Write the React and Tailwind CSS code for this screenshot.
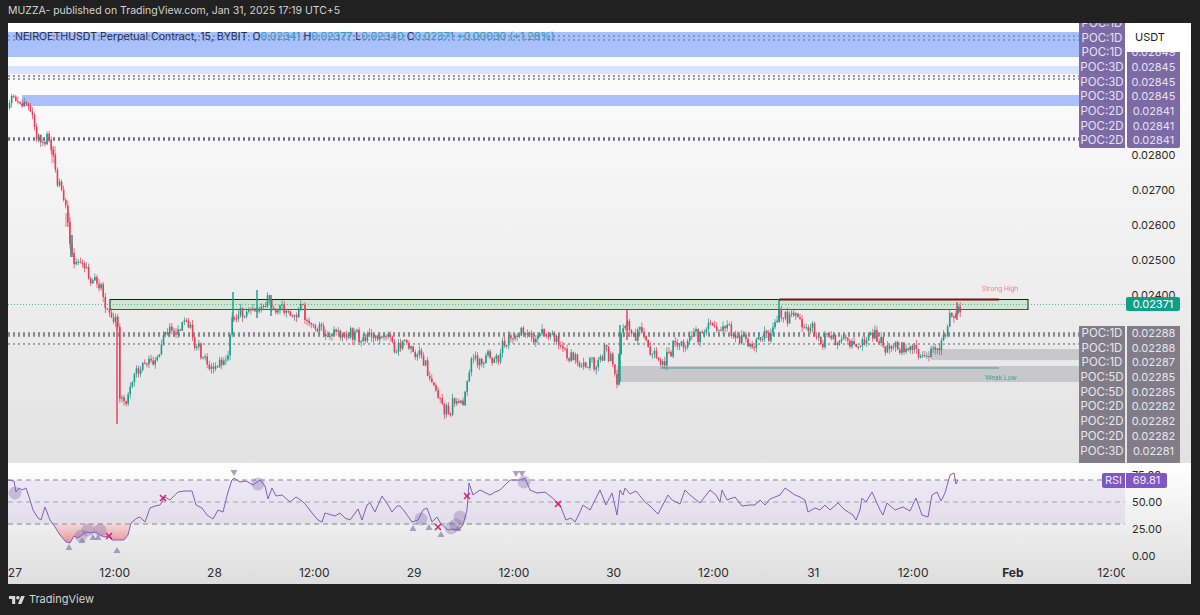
import React from "react";

const FONT = "font-['Inter','Liberation_Sans',sans-serif]";

// price path traced from the chart, page coordinates [x, y]
const pricePath = [
  [9, 108], [12, 100], [16, 105], [20, 103], [24, 100], [28, 105], [30, 115], [34, 130], [40, 135], [44, 145], [47, 135],
  [50, 150], [53, 155], [55, 170], [58, 180], [62, 195], [65, 210], [68, 230], [71, 250], [74, 262], [78, 265], [84, 268],
  [90, 275], [95, 285], [100, 292], [105, 300], [110, 315], [113, 325], [117, 322], [119, 395], [125, 400], [130, 385],
  [135, 375], [140, 368], [147, 360], [155, 358], [162, 340], [168, 335], [175, 330], [183, 322], [190, 325], [195, 345],
  [205, 362], [213, 372], [222, 365], [228, 345], [232, 325], [237, 312], [245, 310], [255, 310], [262, 306], [270, 305],
  [280, 310], [290, 312], [300, 310], [305, 318], [315, 328], [330, 335], [345, 335], [360, 338], [375, 338], [385, 335],
  [395, 345], [405, 345], [415, 352], [425, 365], [432, 385], [440, 405], [450, 408], [460, 405], [465, 385], [470, 365],
  [473, 360], [480, 358], [490, 360], [500, 350], [510, 340], [520, 335], [535, 337], [550, 335], [560, 345], [570, 358],
  [585, 365], [595, 365], [603, 350], [610, 360], [617, 378], [619, 340], [622, 325], [630, 330], [640, 335], [650, 350],
  [660, 365], [668, 350], [680, 345], [690, 338], [700, 332], [720, 328], [735, 335], [750, 345], [765, 335], [775, 325],
  [780, 312], [790, 315], [800, 322], [815, 335], [830, 342], [850, 340], [858, 350], [870, 330], [880, 345], [900, 348],
  [915, 348], [930, 358], [935, 345], [945, 335], [950, 315], [957, 305], [960, 310],
];

// the long wicks that stick out of the path
const spikes = [
  [117, 322, 424, "#ee3a56"],
  [233, 292, 322, "#1a9c8a"],
  [257, 290, 318, "#1a9c8a"],
  [271, 295, 316, "#1a9c8a"],
  [627, 310, 340, "#ee3a56"],
  [620, 325, 382, "#1a9c8a"],
  [779, 299, 322, "#1a9c8a"],
  [957, 302, 320, "#ee3a56"],
];

const rsiPath = [
  [8, 480], [14, 481], [16, 492], [19, 488], [22, 490], [26, 488], [30, 500], [33, 510], [38, 518], [41, 520], [45, 507],
  [50, 520], [55, 527], [60, 535], [66, 542], [70, 543], [74, 536], [78, 538], [82, 535], [86, 532], [90, 533], [96, 532],
  [100, 535], [104, 537], [108, 536], [112, 540], [118, 540], [124, 540], [128, 535], [131, 523], [137, 518], [140, 517],
  [145, 522], [150, 508], [155, 506], [160, 505], [165, 497], [170, 500], [178, 492], [185, 491], [192, 491], [196, 505],
  [202, 508], [207, 515], [213, 519], [218, 510], [223, 512], [228, 492], [232, 480], [234, 478], [240, 482], [246, 481],
  [253, 485], [260, 480], [265, 486], [268, 499], [272, 488], [276, 496], [282, 495], [290, 502], [296, 497], [302, 501],
  [306, 505], [312, 513], [318, 520], [322, 522], [325, 513], [335, 516], [340, 513], [345, 518], [350, 520], [358, 509],
  [362, 520], [367, 505], [370, 503], [375, 512], [382, 496], [388, 505], [392, 512], [397, 506], [400, 506], [405, 512],
  [412, 522], [418, 520], [423, 510], [427, 508], [432, 522], [437, 517], [441, 524], [448, 530], [452, 529], [458, 530],
  [463, 525], [467, 510], [469, 483], [473, 495], [480, 490], [490, 495], [495, 492], [500, 490], [510, 480], [517, 480],
  [520, 480], [525, 478], [530, 490], [537, 493], [545, 492], [555, 500], [560, 505], [566, 520], [571, 518], [575, 522],
  [580, 512], [583, 505], [590, 510], [600, 490], [606, 505], [612, 493], [617, 515], [620, 490], [623, 495], [625, 488],
  [630, 494], [636, 491], [645, 502], [650, 506], [658, 514], [668, 495], [672, 500], [680, 504], [685, 490], [690, 495],
  [700, 503], [710, 490], [716, 495], [720, 502], [722, 490], [727, 500], [735, 497], [742, 506], [750, 505], [755, 505],
  [760, 500], [765, 505], [770, 499], [780, 495], [785, 488], [795, 495], [800, 497], [805, 500], [808, 512], [815, 508],
  [820, 510], [825, 505], [830, 510], [838, 503], [845, 510], [853, 515], [856, 520], [860, 510], [862, 498], [866, 502],
  [872, 492], [880, 510], [883, 515], [887, 503], [895, 510], [903, 507], [910, 511], [916, 498], [922, 515], [928, 517],
  [932, 495], [937, 492], [941, 501], [945, 493], [950, 475], [954, 473], [956, 484], [958, 480],
];

const rsiCircles = [
  [15, 493], [81, 536], [88, 530], [100, 530], [258, 484], [421, 519], [451, 528], [456, 525], [460, 517], [524, 482],
];
const rsiUp = [[69, 547], [117, 550], [82, 540], [93, 537], [98, 537], [413, 528], [429, 527], [441, 534], [458, 528]];
const rsiDown = [[234, 473], [516, 474], [522, 474]];
const rsiCross = [[163, 498], [109, 536], [438, 527], [467, 496], [558, 504]];

const topPoc = [
  ["POC:1D", "0.02849"],
  ["POC:3D", "0.02845"],
  ["POC:3D", "0.02845"],
  ["POC:3D", "0.02845"],
  ["POC:2D", "0.02841"],
  ["POC:2D", "0.02841"],
  ["POC:2D", "0.02841"],
];
const lowPoc = [
  ["POC:1D", "0.02288"],
  ["POC:1D", "0.02288"],
  ["POC:1D", "0.02287"],
  ["POC:5D", "0.02285"],
  ["POC:5D", "0.02285"],
  ["POC:2D", "0.02282"],
  ["POC:2D", "0.02282"],
  ["POC:2D", "0.02282"],
  ["POC:3D", "0.02281"],
];
const timeLabels = ["27", "12:00", "28", "12:00", "29", "12:00", "30", "12:00", "31", "12:00", "Feb", "12:00"];

const interp = (path, x) => {
  for (let i = 1; i < path.length; i++) {
    if (x <= path[i][0]) {
      const [x0, y0] = path[i - 1];
      const [x1, y1] = path[i];
      return y0 + ((y1 - y0) * (x - x0)) / (x1 - x0);
    }
  }
  return path[path.length - 1][1];
};

const makeCandles = () => {
  let seed = 27;
  const rnd = () => {
    seed = (seed * 16807) % 2147483647;
    return seed / 2147483647;
  };
  const candles = [];
  let prev = pricePath[0][1];
  for (let x = 9; x <= 960; x += 2.08) {
    // slow swing on top of the traced path, so the candles chop like the real ones
    const swing = Math.sin(x * 0.37) * 3.5 + Math.sin(x * 0.91 + 1) * 2.5;
    const close = interp(pricePath, x) + swing + (rnd() - 0.5) * 10;
    const top = Math.min(prev, close);
    const bottom = Math.max(prev, close);
    candles.push({
      x,
      top,
      h: Math.max(bottom - top, 1),
      wickTop: top - rnd() * 5,
      wickBottom: bottom + rnd() * 5,
      up: close < prev,
    });
    prev = close;
  }
  return candles;
};

const candles = makeCandles();
const toPoints = (path) => path.map((p) => p.join(",")).join(" ");

const PriceChart = () => (
  <svg className="absolute inset-0 w-full h-full blur-[0.3px]" viewBox="8 23 1117 440">
    {/* supply zones */}
    <rect x="8" y="32" width="1072" height="25" fill="#a9c1fb" />
    <rect x="8" y="66" width="1072" height="8" fill="#d8e3fd" />
    <rect x="22" y="95" width="1058" height="11" fill="#abc0fa" />
    <line x1="8" x2="1080" y1="36" y2="36" stroke="#6f8ad0" strokeWidth="1.3" strokeDasharray="2 3" />
    <line x1="8" x2="1080" y1="40" y2="40" stroke="#6f8ad0" strokeWidth="1.3" strokeDasharray="2 3" />
    <line x1="8" x2="1080" y1="76" y2="76" stroke="#7a7a96" strokeWidth="1.3" strokeDasharray="2 3" />
    <line x1="8" x2="1080" y1="79" y2="79" stroke="#7a7a96" strokeWidth="1.3" strokeDasharray="2 3" />
    <line x1="8" x2="1080" y1="139" y2="139" stroke="#70708a" strokeWidth="3.5" strokeDasharray="2 3" />

    {/* lower zones and levels */}
    <rect x="932" y="349" width="148" height="11" fill="#c8c8ca" />
    <rect x="617" y="366" width="463" height="16" fill="#c8c8ca" />
    <line x1="8" x2="1080" y1="334.5" y2="334.5" stroke="#88888b" strokeWidth="4.5" strokeDasharray="2 3" />
    <line x1="8" x2="1080" y1="344" y2="344" stroke="#88888b" strokeWidth="1.3" strokeDasharray="2 3" />
    <line x1="660" x2="999" y1="368" y2="368" stroke="#4f9d94" strokeWidth="1" />

    {/* green order block */}
    <rect x="110" y="300" width="918" height="10" fill="#cfe5cf" />
    <line x1="110" x2="1028" y1="299.5" y2="299.5" stroke="#16201a" strokeWidth="1" />
    <line x1="110" x2="1028" y1="309.5" y2="309.5" stroke="#4a544c" strokeWidth="1.2" />
    <line x1="110" x2="110" y1="299" y2="310" stroke="#16201a" strokeWidth="1" />
    <line x1="1028" x2="1028" y1="299" y2="310" stroke="#16201a" strokeWidth="1" />
    <line x1="8" x2="1125" y1="304.5" y2="304.5" stroke="#3c9c8c" strokeWidth="0.8" strokeDasharray="1 2" />

    {/* candles */}
    {candles.map((c) => (
      <g key={c.x} fill={c.up ? "#1a9c8a" : "#ee3a56"}>
        <rect x={c.x + 0.25} y={c.wickTop} width="0.7" height={c.wickBottom - c.wickTop} />
        <rect x={c.x - 0.2} y={c.top} width="1.6" height={c.h} />
      </g>
    ))}
    {spikes.map(([x, y1, y2, color]) => (
      <rect key={x} x={x - 0.7} y={y1} width="1.4" height={y2 - y1} fill={color} />
    ))}
    <rect x="51" y="146" width="5" height="17" fill="#ee3a56" fillOpacity="0.35" />
    <rect x="65" y="213" width="5" height="14" fill="#ee3a56" fillOpacity="0.35" />
    <rect x="70" y="235" width="3" height="22" fill="#77777a" fillOpacity="0.8" />

    <rect x="779" y="298.5" width="220" height="2" fill="#7a1020" />

    <text x="1000" y="291" textAnchor="middle" fontSize="6.5" fill="#e77c88" fontFamily="Inter, sans-serif">
      Strong High
    </text>
    <text x="1001" y="380" textAnchor="middle" fontSize="6.5" fill="#3f9c90" fontFamily="Inter, sans-serif">
      Weak Low
    </text>
  </svg>
);

const RsiChart = () => (
  <svg className="absolute inset-0 w-full h-full" viewBox="8 463 1117 121">
    <defs>
      <linearGradient id="oversold" x1="0" x2="0" y1="0" y2="1">
        <stop offset="0" stopColor="#f7a8a8" stopOpacity="0.1" />
        <stop offset="1" stopColor="#ee6a78" stopOpacity="0.75" />
      </linearGradient>
      <clipPath id="below30">
        <rect x="8" y="524" width="1117" height="40" />
      </clipPath>
    </defs>
    <rect x="8" y="480" width="1117" height="44" fill="#7e57c2" fillOpacity="0.1" />
    <line x1="8" x2="1125" y1="480" y2="480" stroke="#85818f" strokeDasharray="5 4" />
    <line x1="8" x2="1125" y1="502" y2="502" stroke="#a3a0aa" strokeDasharray="5 4" />
    <line x1="8" x2="1125" y1="524" y2="524" stroke="#85818f" strokeDasharray="5 4" />
    <polygon
      clipPath="url(#below30)"
      points={`50,524 ${toPoints(rsiPath.filter((p) => p[0] >= 50 && p[0] <= 137))} 137,524`}
      fill="url(#oversold)"
    />
    {rsiCircles.map(([x, y]) => (
      <circle key={`${x}-${y}`} cx={x} cy={y} r="6.5" fill="#7e6aa8" fillOpacity="0.35" />
    ))}
    {rsiUp.map(([x, y]) => (
      <polygon key={`${x}-${y}`} points={`${x - 3.5},${y + 3} ${x + 3.5},${y + 3} ${x},${y - 3}`} fill="#8f82b0" fillOpacity="0.75" />
    ))}
    {rsiDown.map(([x, y]) => (
      <polygon key={`${x}-${y}`} points={`${x - 3.5},${y - 3} ${x + 3.5},${y - 3} ${x},${y + 3}`} fill="#8f82b0" fillOpacity="0.75" />
    ))}
    <polyline points={toPoints(rsiPath)} fill="none" stroke="#7e5fbd" strokeWidth="1" strokeLinejoin="round" />
    {rsiCross.map(([x, y]) => (
      <path
        key={`${x}-${y}`}
        d={`M${x - 3} ${y - 3}L${x + 3} ${y + 3}M${x + 3} ${y - 3}L${x - 3} ${y + 3}`}
        stroke="#d6246e"
        strokeWidth="1.6"
      />
    ))}
  </svg>
);

const App = () => {
  return (
    <div className={`w-[1200px] h-[615px] bg-[#212121] flex flex-col overflow-hidden ${FONT}`}>
      <div className="h-[23px] pl-2 flex items-center text-[#d4d4d4] text-[10.5px] leading-none whitespace-nowrap">
        MUZZA- published on TradingView.com, Jan 31, 2025 17:19 UTC+5
      </div>

      <div className="w-[1183px] ml-2 flex flex-col">
        {/* main pane */}
        <div className="h-[440px] flex bg-gradient-to-b from-white to-[#e2e2e2] overflow-hidden">
          <div className="relative w-[1117px] shrink-0">
            <PriceChart />
            <div className="absolute left-[7px] top-[8px] h-[13px] flex items-center gap-[5px] text-[10.6px] leading-none whitespace-nowrap text-[#2b2f45]">
              <span>NEIROETHUSDT Perpetual Contract, 15, BYBIT</span>
              <span className="text-[#2f9aa8]">
                <span className="text-[#2b2f45]">O</span>0.02341 <span className="text-[#2b2f45]">H</span>0.02377{" "}
                <span className="text-[#2b2f45]">L</span>0.02340 <span className="text-[#2b2f45]">C</span>0.02371 +0.00030 (+1.28%)
              </span>
            </div>
            {/* left column of the POC labels */}
            <div className="absolute right-0 top-0 w-[46px] h-[125px] bg-[#7b6aa6] text-[#e6e2f0] text-[11.5px] text-center flex flex-col justify-end rounded-bl-[2px] overflow-hidden">
              {["POC:1D", "POC:1D", "POC:1D", "POC:3D", "POC:3D", "POC:3D", "POC:2D", "POC:2D", "POC:2D"].map((label, i) => (
                <div key={i} className="h-[14.7px] shrink-0 leading-[14.7px]">
                  {label}
                </div>
              ))}
            </div>
            <div className="absolute right-0 top-[303px] w-[46px] h-[137px] bg-[#807c88] text-[#e8e8ea] text-[11.5px] text-center overflow-hidden">
              {lowPoc.map(([label], i) => (
                <div key={i} className="h-[14.7px] leading-[14.7px]">
                  {label}
                </div>
              ))}
            </div>
          </div>

          {/* price axis */}
          <div className="relative flex-1 pl-[2px] text-[11px] text-[#2b2b2b] flex flex-col items-start">
            <div className="absolute left-0 right-0 top-0 h-[29px] bg-white text-[#222] text-[11px] flex items-center pl-[10px] z-10">USDT</div>
            <div className="mt-[22px] w-[53px] h-[103px] bg-[#7b6aa6] text-[#e6e2f0] text-center rounded-b-[2px] overflow-hidden flex flex-col justify-end">
              {topPoc.map(([, price], i) => (
                <div key={i} className="h-[14.7px] shrink-0 leading-[14.7px]">
                  {price}
                </div>
              ))}
            </div>
            <div className="w-[53px] text-center">
              {["0.02800", "0.02700", "0.02600", "0.02500", "0.02400"].map((price) => (
                <div key={price} className="h-[15px] leading-[15px] mb-[20px]">
                  {price}
                </div>
              ))}
            </div>
            <div className="absolute left-[1px] top-[274px] w-[54px] h-[14px] bg-[#0e9f87] text-white text-center leading-[14px] rounded-[2px]">
              0.02371
            </div>
            <div className="mt-[3px] w-[53px] h-[137px] bg-[#807c88] text-[#e8e8ea] text-center overflow-hidden">
              {lowPoc.map(([, price], i) => (
                <div key={i} className="h-[14.7px] leading-[14.7px]">
                  {price}
                </div>
              ))}
            </div>
          </div>
        </div>

        {/* rsi pane */}
        <div className="h-[121px] flex bg-gradient-to-b from-white to-[#dedede] overflow-hidden">
          <div className="relative w-[1117px] shrink-0 flex flex-col justify-end overflow-hidden">
            <RsiChart />
            <div className="relative h-[24px] pt-[2px] flex items-center -ml-[43px] text-[12px] text-[#2b2b2b]">
              {timeLabels.map((label, i) => (
                <span key={i} className={`w-[99.8px] shrink-0 text-center ${label === "Feb" ? "font-bold" : ""}`}>
                  {label}
                </span>
              ))}
            </div>
            <div className="absolute right-0 top-[10px] w-[23px] h-[15px] bg-[#7e57c2] text-[#efeaf8] text-[11px] leading-[15px] text-center rounded-l-[2px]">
              RSI
            </div>
          </div>
          <div className="relative flex-1 pl-[2px] -mt-[1.5px] text-[11px] text-[#2b2b2b]">
            {["75.00", "50.00", "25.00", "0.00"].map((value) => (
              <div key={value} className="h-[27.3px] leading-[27.3px] w-[53px] pl-[5px]">
                {value}
              </div>
            ))}
            <div className="absolute left-[1px] top-[11.5px] w-[41px] h-[15px] bg-[#7e57c2] text-[#efeaf8] text-[11px] leading-[15px] text-center rounded-r-[2px]">
              69.81
            </div>
          </div>
        </div>
      </div>

      <div className="flex-1 pl-[9px] flex items-center gap-[4px] text-[#d4d4d4] text-[11px]">
        <svg width="16" height="8" viewBox="0 4 36 18" fill="#d8d8d8">
          <path d="M14 22H7V11H0V4h14v18zM28 22h-8l7.5-18h8L28 22z" />
          <circle cx="20" cy="8" r="4" />
        </svg>
        <span>TradingView</span>
      </div>
    </div>
  );
};

export default App;
